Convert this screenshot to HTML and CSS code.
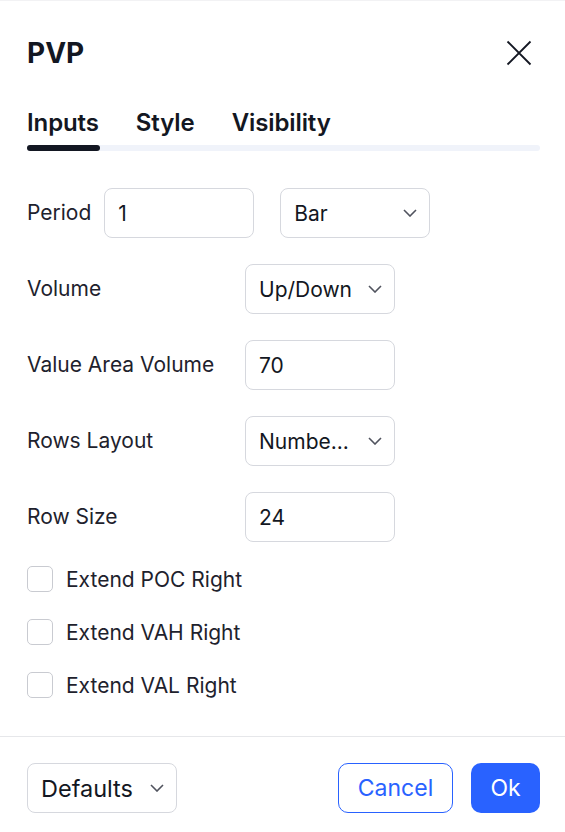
FILE: index.html
```html
<!DOCTYPE html>
<html>
<head>
<meta charset="utf-8">
<link rel="stylesheet" href="styles.css">
</head>
<body>
<div class="dialog">
  <div class="header">
    <div class="title">PVP</div>
    <svg class="close" width="26" height="26" viewBox="0 0 26 26"><path d="M1.5 1.5L24.5 24.5M24.5 1.5L1.5 24.5" stroke="#131722" stroke-width="1.8" fill="none"/></svg>
  </div>
  <div class="tabs">
    <div class="tab active">Inputs</div>
    <div class="tab">Style</div>
    <div class="tab">Visibility</div>
  </div>
  <div class="track"><div class="track-active"></div></div>
  <div class="body">
    <div class="row">
      <div class="label">Period</div>
      <div class="field short">1</div>
      <div class="field select period-select">Bar<svg class="chev" width="14" height="8" viewBox="0 0 14 8"><path d="M1 1l6 6 6-6" stroke="#50535e" stroke-width="1.6" fill="none"/></svg></div>
    </div>
    <div class="row grid">
      <div class="label">Volume</div>
      <div class="field select">Up/Down<svg class="chev" width="14" height="8" viewBox="0 0 14 8"><path d="M1 1l6 6 6-6" stroke="#50535e" stroke-width="1.6" fill="none"/></svg></div>
    </div>
    <div class="row grid">
      <div class="label">Value Area Volume</div>
      <div class="field">70</div>
    </div>
    <div class="row grid">
      <div class="label">Rows Layout</div>
      <div class="field select">Numbe...<svg class="chev" width="14" height="8" viewBox="0 0 14 8"><path d="M1 1l6 6 6-6" stroke="#50535e" stroke-width="1.6" fill="none"/></svg></div>
    </div>
    <div class="row grid">
      <div class="label">Row Size</div>
      <div class="field">24</div>
    </div>
    <div class="checks">
      <div class="check"><span class="box"></span>Extend POC Right</div>
      <div class="check"><span class="box"></span>Extend VAH Right</div>
      <div class="check"><span class="box"></span>Extend VAL Right</div>
    </div>
  </div>
  <div class="footer">
    <div class="field select defaults">Defaults<svg class="chev" width="14" height="8" viewBox="0 0 14 8"><path d="M1 1l6 6 6-6" stroke="#50535e" stroke-width="1.6" fill="none"/></svg></div>
    <div class="buttons">
      <div class="btn cancel">Cancel</div>
      <div class="btn ok">Ok</div>
    </div>
  </div>
</div>
</body>
</html>
```
FILE: styles.css
```css
* { box-sizing: border-box; }
html, body { margin: 0; padding: 0; background: #fff; }
body {
  font-family: Inter, "Noto Sans", sans-serif;
  color: #131722;
  width: 565px;
  height: 832px;
  overflow: hidden;
}
.dialog {
  border-top: 1px solid #f2f2f4;
  height: 832px;
  position: relative;
}
.header {
  display: flex;
  justify-content: space-between;
  align-items: center;
  padding: 35px 33px 0 27px;
  height: 68px;
}
.title {
  font-size: 28px;
  font-weight: 700;
  line-height: 32px;
}
.close { display: block; }
.tabs {
  display: flex;
  gap: 37px;
  padding: 40px 0 0 27px;
}
.tab {
  font-size: 24px;
  font-weight: 600;
  line-height: 28px;
  letter-spacing: -0.1px;
}
.track {
  margin: 8px 25px 0 27px;
  height: 6px;
  background: #f0f3fa;
  border-radius: 3px;
}
.track-active {
  width: 73px;
  height: 6px;
  background: #131722;
  border-radius: 3px;
}
.body {
  padding: 37px 27px 0 27px;
  display: flex;
  flex-direction: column;
  gap: 26px;
}
.row {
  display: flex;
  align-items: center;
  height: 50px;
}
.row.grid {
  display: grid;
  grid-template-columns: 218px 150px;
  align-items: center;
}
.label {
  font-size: 21px;
  line-height: 24px;
  color: #1e222d;
}
.row:first-child .label { margin-right: 13px; }
.field {
  height: 50px;
  width: 150px;
  border: 1.5px solid #d6d8de;
  border-radius: 8px;
  font-size: 21px;
  display: flex;
  align-items: center;
  padding: 0 13px;
  position: relative;
}
.select { justify-content: space-between; padding-right: 12px; }
.period-select { margin-left: 26px; }
.chev { display: block; }
.checks {
  display: flex;
  flex-direction: column;
  gap: 27px;
  margin-top: -2px;
}
.check {
  display: flex;
  align-items: center;
  gap: 13px;
  font-size: 21px;
  height: 26px;
  color: #1e222d;
}
.box {
  width: 26px;
  height: 26px;
  border: 1.5px solid #c9cbd1;
  border-radius: 5px;
}
.footer {
  position: absolute;
  left: 0; right: 0;
  top: 735px;
  border-top: 1.5px solid #e6e7ea;
  display: flex;
  justify-content: space-between;
  padding: 26px 25px 0 27px;
}
.defaults { font-size: 23.5px; padding-left: 13px; }
.buttons { display: flex; gap: 18px; }
.btn {
  height: 50px;
  border-radius: 10px;
  font-size: 23px;
  display: flex;
  align-items: center;
  justify-content: center;
}
.cancel {
  width: 115px;
  border: 1.5px solid #2962ff;
  color: #2962ff;
}
.ok {
  width: 69px;
  background: #2962ff;
  color: #fff;
}
```
